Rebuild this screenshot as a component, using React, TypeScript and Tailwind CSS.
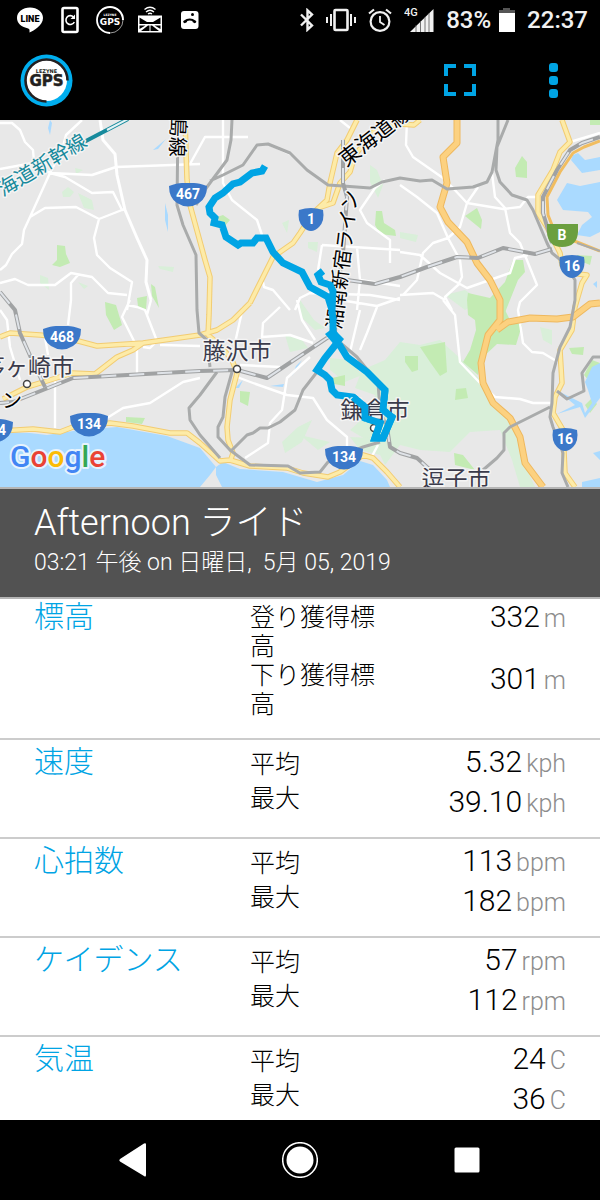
import React from "react";

type Reading = { label: string; value: string; unit: string };
type Metric = { name: string; readings: Reading[] };

const jp = "font-['Roboto','Noto_Sans_CJK_JP_Light','Noto_Sans_CJK_JP',sans-serif]";

const metrics: Metric[] = [
  {
    name: "標高",
    readings: [
      { label: "登り獲得標高", value: "332", unit: "m" },
      { label: "下り獲得標高", value: "301", unit: "m" },
    ],
  },
  {
    name: "速度",
    readings: [
      { label: "平均", value: "5.32", unit: "kph" },
      { label: "最大", value: "39.10", unit: "kph" },
    ],
  },
  {
    name: "心拍数",
    readings: [
      { label: "平均", value: "113", unit: "bpm" },
      { label: "最大", value: "182", unit: "bpm" },
    ],
  },
  {
    name: "ケイデンス",
    readings: [
      { label: "平均", value: "57", unit: "rpm" },
      { label: "最大", value: "112", unit: "rpm" },
    ],
  },
  {
    name: "気温",
    readings: [
      { label: "平均", value: "24", unit: "C" },
      { label: "最大", value: "36", unit: "C" },
    ],
  },
];

function StatusBar() {
  return (
    <div className="flex h-10 items-center justify-between pl-4 pr-3 text-[24px] leading-10 text-[#f1f1f1]">
      <div className="flex items-center gap-3">
        <svg className="h-7 w-7" viewBox="0 0 28 28">
          <path
            d="M14 1.5C6.800 1.500 1 6 1 12c0 5 4 9 10.500 10.200 1.800.4 2.300 1 2 4.300 3.500-1.500 13.500-7 13.500-14.500C27 6 21.200 1.500 14 1.500z"
            fill="#fff"
          />
          <text x="14" y="15.500" textAnchor="middle" fontSize="9" fontWeight="900" fontFamily="Roboto" fill="#000">
            LINE
          </text>
        </svg>
        <svg className="h-7 w-7" viewBox="0 0 28 28" fill="none" stroke="#fff">
          <rect x="6.500" y="2" width="15" height="24" rx="1.500" strokeWidth="2.600" />
          <path d="M17.500 11a4.400 4.400 0 1 0 .8 5" strokeWidth="1.600" />
          <path d="M19 8.500v4.500h-4.500z" fill="#fff" stroke="none" />
        </svg>
        <svg className="h-7 w-7" viewBox="0 0 28 28">
          <path d="M14 1A13 13 0 0 0 14 27" fill="none" stroke="#fff" strokeWidth="1.800" />
          <path d="M14 1A13 13 0 0 1 27 14" fill="none" stroke="#fff" strokeWidth="2" />
          <path d="M27 14A13 13 0 0 1 14 27" fill="none" stroke="#fff" strokeWidth=".6" />
          <text x="14" y="10" textAnchor="middle" fontSize="3" fontWeight="700" fontFamily="DejaVu Sans" fill="#fff">
            LEZYNE
          </text>
          <text x="14" y="18.500" textAnchor="middle" fontSize="9" fontWeight="700" fontFamily="DejaVu Sans" fill="#fff">
            GPS
          </text>
        </svg>
        <svg className="h-7 w-7" viewBox="0 0 28 28" fill="none" stroke="#fff">
          <path d="M8.500 3.500q5.500-4.500 11 0M10 6q4-3.500 8 0M12 8q2-1.500 4 0" strokeWidth="1.300" />
          <path d="M2 9.500h24v17H2z" fill="#fff" stroke="none" />
          <path d="M3.500 11.500l7.500 4.500h6l7.500-4.500v6.500h-21z" fill="#000" stroke="none" />
          <path d="M3.500 19.500h6l-6 3.500zM24.500 19.500h-6l6 3.500zM12 19.500h1.500V25H5zM16 19.500h-1.500V25H23z" fill="#000" stroke="none" />
        </svg>
        <svg className="h-7 w-7" viewBox="0 0 28 28">
          <rect x="5" y="5" width="17.500" height="18" rx="3" fill="#fff" />
          <path d="M7.500 16.500q-.8-1 .2-1.800 6-4.200 12.100 0 1 .8.2 1.800l-1.300.8-2.200-1.400v-.8q-2.700-1-5.400 0v.8l-2.300 1.400z" fill="#000" />
          <circle cx="16.500" cy="8.500" r="1.500" fill="#000" />
        </svg>
      </div>
      <div className="flex items-center gap-3">
        <svg className="h-6 w-[14px]" viewBox="0 0 14 24" fill="none" stroke="#f1f1f1" strokeWidth="2.400">
          <path d="M1 6.500l11 11-4.500 4.200V2.300l4.500 4.200-11 11" />
        </svg>
        <svg className="h-6 w-[30px]" viewBox="0 0 30 24" fill="none" stroke="#f1f1f1">
          <rect x="8.500" y="2" width="13" height="20" rx="1" strokeWidth="2.600" />
          <path d="M5 6v12M25 6v12M1 9v6M29 9v6" strokeWidth="2" />
        </svg>
        <svg className="h-6 w-6" viewBox="0 0 24 24" fill="none" stroke="#f1f1f1" strokeWidth="2.200">
          <circle cx="12" cy="13.500" r="9.400" />
          <path d="M12 8V14l4.500 3" strokeWidth="1.800" />
          <path d="M1 5.500l5-4M23 5.500l-5-4" />
        </svg>
        <svg className="h-7 w-[30px]" viewBox="0 0 30 28">
          <text x="0" y="10" fontSize="11" fontWeight="500" fontFamily="Roboto" fill="#f1f1f1">
            4G
          </text>
          <path d="M6 26L29.500 3v23z" fill="#f1f1f1" />
          <path d="M12 19v7M16.500 15v11M21 11v15M25 7v19" stroke="#555" strokeWidth=".8" />
        </svg>
        <div className="flex items-center gap-2">
          <span className="font-medium">83%</span>
          <svg className="h-6 w-4" viewBox="0 0 16 24">
            <path d="M4 0h7v2h5v4H0V2h4z" fill="#555" />
            <path d="M0 5h16v19H0z" fill="#fff" />
          </svg>
        </div>
        <span className="font-medium">22:37</span>
      </div>
    </div>
  );
}

function AppBar() {
  return (
    <header className="flex h-20 items-center justify-between pl-5 pr-8">
      <svg className="h-[53px] w-[53px]" viewBox="0 0 53 53" role="img" aria-label="Lezyne GPS">
        <circle cx="26.500" cy="26.500" r="26" fill="#00aeef" />
        <circle cx="26.500" cy="26.500" r="20.500" fill="#fff" />
        <path d="M26.500 47.500A21 21 0 1 1 47.500 26.500" fill="none" stroke="#231f20" strokeWidth="2.600" />
        <text x="26.500" y="19" textAnchor="middle" fontSize="5" fontWeight="700" fontFamily="DejaVu Sans" fill="#231f20">
          LEZYNE
        </text>
        <text x="26.500" y="31.500" textAnchor="middle" fontSize="15" fontWeight="700" fontFamily="DejaVu Sans" fill="#231f20" stroke="#231f20" strokeWidth=".5">
          GPS
        </text>
      </svg>
      <div className="flex items-center gap-[54px]">
        <button type="button" aria-label="全画面" className="p-2">
          <svg className="h-8 w-8" viewBox="0 0 32 32" fill="none" stroke="#00a4e4" strokeWidth="4">
            <path d="M2 12V2h10M20 2h10v10M30 20v10H20M12 30H2V20" />
          </svg>
        </button>
        <button type="button" aria-label="メニュー" className="flex w-[30px] flex-col items-center gap-1 py-2">
          <span className="h-[9px] w-[9px] rounded-[3px] bg-[#00a4e4]" />
          <span className="h-[9px] w-[9px] rounded-[3px] bg-[#00a4e4]" />
          <span className="h-[9px] w-[9px] rounded-[3px] bg-[#00a4e4]" />
        </button>
      </div>
    </header>
  );
}

const wideShield = "M-19-9Q-11-12-6-12H6Q11-12 19-9Q19 3 11 8Q0 15-11 8Q-19 3-19-9Z";
const narrowShield = "M-12-10Q0-14 12-10Q14 1 8 7Q0 15-8 7Q-14 1-12-10Z";

const shields = [
  { x: 188, y: 75, text: "467" },
  { x: 311, y: 100, text: "1" },
  { x: 62, y: 218, text: "468" },
  { x: 89, y: 305, text: "134" },
  { x: 344, y: 338, text: "134" },
  { x: -6, y: 311, text: "134" },
  { x: 572, y: 147, text: "16" },
  { x: 565, y: 320, text: "16" },
];

const localRoads =
  "M0 3L12 3L20 10L25 22L33 30L34 42M0 49L33 43L50 53L92 55L116 47L200 44M82 0L66 15L62 30L50 53L30 97L24 110L22 124L12 134L6 145L0 150" +
  "M50 53L65 57L92 73L113 72L122 90L99 99L76 87L45 88L30 97M99 99L94 118L97 135L110 148L132 162L127 190M125 89L122 90" +
  "M0 163L15 159L28 165L55 165L71 153L92 157L108 173L127 175M78 155L71 163L71 180L68 205M127 185L137 187L145 190L157 221L150 228L143 227" +
  "M151 180L147 195M130 180L122 197L137 227L137 253M190 44L205 17L248 17M223 0L223 63L232 80L257 100L262 115M268 24L292 35" +
  "M340 0L350 8M322 125L400 130M322 125L318 150M357 127L360 160L357 190M263 162L264 167L273 170L290 190M385 60L375 68L360 90L367 103L390 120L390 143" +
  "M295 190L300 178L310 173L370 175L400 180M407 0L406 25L413 37L443 58L453 68L467 83L503 89L520 87L528 77L538 77" +
  "M400 65L417 77L437 93L448 118L460 140L462 157L458 165L445 177L452 190M492 53L495 77L505 88L510 113L520 123L537 165L520 182L518 190L523 223L532 232L543 233L558 242" +
  "M478 67L467 83L460 107L448 118L433 123L423 133L417 160L403 175M400 132L420 135L440 153L467 168L510 153L515 138L528 135M400 175L433 173L445 180" +
  "M443 180L455 195L460 242L480 263L495 277L520 279L533 283L550 283M243 187L235 223M280 187L263 203L262 217L290 215L313 223M297 180L302 200L315 220" +
  "M237 257L253 263L287 275L313 278L327 300L347 317L347 327M310 237L287 258L282 290L270 303L268 323L245 338M240 245L280 247M377 187L367 213L360 230" +
  "M360 190L350 232M340 180L377 186L400 178M0 190L7 200L10 227L20 260M55 260L55 308M200 258L183 262L150 283L123 288L107 298M45 217L48 235M200 226L160 225M570 22L600 13M371 338L378 325M360 160L400 166";

const yellowRoads =
  "M185 0L187 60L190 85L205 140L210 157L209 195L208 215L220 225L232 240L237 253L230 280L227 307L228 320L233 333L230 342" +
  "M250 183L233 200L217 210L200 215L143 223L97 226L67 218L40 215L10 213L0 217M357 0L347 20L337 33L330 63L327 80L313 93L300 113L293 123L273 137L263 157L250 183" +
  "M318 88L333 83L340 63L350 52L355 35L375 10L400 4L414 5L420 0M143 223L133 230L117 237L95 254L72 253L50 260L27 267L3 279" +
  "M0 311L33 309L60 312L73 307L110 303L133 306L170 313L187 313L200 323L220 341L230 340L250 346L287 348L303 353L328 357L340 352L363 335L373 338L387 352L400 367" +
  "M562 0L570 22L560 32L553 50L538 75L538 93L547 107L560 133L562 145L570 153L587 155L582 163L575 187L572 210L560 230L562 263L555 277L553 293L563 310L565 353L575 367";

const orangeRoads =
  "M457 0L457 23L443 37L447 63L440 87L448 102L467 122L477 143L490 160L500 180L500 200L488 215L481 243L483 263L493 283L510 298L520 317L525 343L543 367" +
  "M497 210L508 202L530 198L557 199L573 197L590 184L600 183";

const railways =
  "M178 0L177 85L183 105L196 135L197 190L199 213L207 220L210 247M232 0L231 20L227 40L207 67L196 85M210 61L223 55L243 45L257 25L268 24L290 33L307 50L328 65L343 66L370 68L382 62L400 58L420 61L432 60L447 69L473 67L487 62L492 52L498 20L498 0" +
  "M508 0L497 27L496 50L500 62L512 75L527 80L533 90L547 123L552 133L562 141L575 160L575 180L570 207L560 227L553 253L552 283L550 297L553 307L563 333L562 353L568 367" +
  "M550 287L510 307L504 313L504 330L497 338L483 350M557 271L567 279L584 271L582 253L593 237L600 237M232 252L225 277L223 297L218 307L218 317L230 330L250 345L288 346L300 353L320 352L328 342L363 327L380 322" +
  "M317 252L303 270L295 290L280 302L268 308L260 308L253 313L247 315L232 330M217 252L200 275L189 288L190 300L200 315L220 338M337 220L357 237L378 263L380 290L387 307";

const stripedRailways =
  "M0 172L15 190L20 213L32 240L45 267M327 218L267 258L237 250L200 251L73 258L43 270L13 282L0 283M343 20L343 63L347 77L343 133L336 180L335 215L327 218" +
  "M347 160L375 164L400 157L427 147L457 137L478 138L503 128L535 134L552 129M552 123L543 93L543 77L557 50L570 30L582 23L600 17M387 307L390 327L400 333L417 338L428 348L440 360";

const route =
  "M265 46L262 51L252 53L240 62L233 64L223 73L215 78L209 87L210 93L215 98L214 103L222 105L226 117L238 125L241 123L253 123L257 118L266 118L273 132L283 143L302 152L310 167L328 177L332 190L333 200L333 212L339 222" +
  "M323 151L318 155L321 162L330 165L333 171L332 190M337 223L325 238L317 250L325 255L330 260L332 270L337 275L353 277L365 287L365 298L380 303L375 318L383 318L392 297L383 290L385 270L367 252L347 237L339 224";

function RouteMap() {
  return (
    <svg className="block h-auto w-full" viewBox="0 0 600 367" role="img" aria-label="ルートマップ">
      <rect width="600" height="367" fill="#e8e8e8" />
      <g fill="#d9efd9">
        <path d="M400 222L420 225L440 220L462 240L482 262L495 285L512 302L520 325L525 345L535 367L520 367L512 340L500 310L470 312L450 332L420 330L400 325L385 345L375 325L350 310L372 290L375 275L355 268L362 250L385 240Z" />
        <path d="M62 72L68 67L74 72L70 77L63 77ZM78 73L92 80L94 90L84 88ZM75 48L83 50L76 54ZM40 155L48 158L49 170L40 163ZM158 146L174 147L173 152L160 149ZM78 162L88 166L84 169Z" />
        <path d="M370 45L377 50L383 65L378 78L370 62ZM308 122L318 122L317 132L308 128ZM282 103L289 100L287 113ZM300 180L314 200L325 208L315 210L300 196ZM282 322L298 307L312 300L302 322L285 333ZM285 215L302 220L308 228L290 232ZM400 112L418 115L416 122L400 118Z" />
        <path d="M330 238L350 240L362 255L345 262L330 250ZM350 317L372 318L380 335L360 330ZM540 207L552 210L552 225L543 220ZM300 315L330 322L318 330ZM445 175L465 170L480 180L465 190Z" />
      </g>
      <g fill="#c3ebb3">
        <path d="M57 125L65 126L66 134L70 143L60 147L52 145L57 140ZM137 178L147 176L146 190L138 186ZM151 164L155 167L159 188L152 176ZM105 182L116 185L122 205L114 210L106 195Z" />
        <path d="M376 91L382 91L384 103L395 110L396 116L380 114L375 105ZM515 48L522 36L527 42L527 58L516 57ZM465 96L477 88L482 100L481 109ZM513 140L523 140L525 152L518 160L510 180L500 205L500 190L478 190L467 180L468 173L490 178L505 162Z" />
        <path d="M467 180L500 180L510 200L522 205L516 225L497 224L480 240L478 255L463 242L470 230L476 210L475 200L468 195ZM420 227L445 222L447 252L440 256L430 242ZM405 236L418 236L418 250L412 252L405 242ZM454 333L463 335L475 350L455 345Z" />
        <path d="M332 258L345 255L345 266L334 264ZM240 271L250 272L248 286L240 282ZM126 297L145 298L142 304L126 302ZM577 135L592 136L590 145L578 140ZM569 228L584 227L583 235L572 234ZM590 0H600V5H590ZM223 95L230 100L224 107L217 97ZM584 255L592 240L600 243L590 262ZM456 269L466 268L468 278L455 280ZM585 285L592 278L597 284L590 293Z" />
      </g>
      <g fill="#aadaff">
        <path d="M0 312L30 313L47 315L80 310L117 307L167 316L200 328L216 347L210 355L200 367H0ZM216 347L223 342L240 349L283 352L317 362L343 355L360 341L373 345L387 360L390 367H222L216 355Z" />
        <path d="M567 63L580 66L600 62V112L590 117L577 115L582 105L592 97L588 92L563 90L557 80ZM573 35L578 33L585 40L600 37V50L582 53L571 40ZM558 271L570 277L582 283L585 293L592 283L588 270L585 262L592 247L600 243V278L585 298L580 287L557 294L575 285ZM582 362L600 358V367H582ZM593 333L600 331V340ZM593 164L597 161L597 168Z" />
        <path d="M165 83L168 95L168 112L165 100ZM153 30L166 19L158 29ZM50 0L52 3L50 15L48 8ZM302 240L292 256L296 246ZM235 268L243 260L239 268ZM270 266L284 264L283 267Z" />
      </g>
      <g fill="none" strokeLinejoin="round">
        <path d={localRoads} stroke="#fff" strokeWidth="2.400" />
        <path d="M100 0L103 20L115 34L117 55L125 90L137 118L147 140L146 162L151 180" stroke="#fff" strokeWidth="3" />
        <path d={yellowRoads} stroke="#f2cc72" strokeWidth="5.500" />
        <path d={yellowRoads} stroke="#fdeba8" strokeWidth="3.500" />
        <path d="M600 21L584 27L573 33L560 52L547 77L548 95L556 115L577 122L600 131" stroke="#f1bd60" strokeWidth="3" />
        <path d={orangeRoads} stroke="#eeb85e" strokeWidth="7" />
        <path d={orangeRoads} stroke="#fcd180" strokeWidth="5" />
        <path d={railways} stroke="#a9abab" strokeWidth="3" />
        <path d="M577 123L600 131" stroke="#a9abab" strokeWidth="2" />
        <path d={stripedRailways} stroke="#a0a2a3" strokeWidth="4" />
        <path d={stripedRailways} stroke="#dfe3e8" strokeWidth="2" strokeDasharray="15 13" />
        <path d="M84 22L128-1" stroke="#178a9c" strokeWidth="4" />
        <path d="M107 10L128-1" stroke="#e4f3f5" strokeWidth="2" />
      </g>
      <g
        fontFamily="'Noto Sans CJK JP', sans-serif"
        fontSize="20"
        fontWeight="400"
        stroke="#f4f4f4"
        strokeWidth="3"
        strokeLinejoin="round"
        paintOrder="stroke"
      >
        <text transform="translate(42 45) rotate(-31)" y="7" textAnchor="middle" fill="#178a9c">
          海道新幹線
        </text>
        <text transform="translate(177 37) rotate(92)" y="7" textAnchor="end" fill="#000">
          島線
        </text>
        <text transform="translate(342 42) rotate(-38)" y="7" fontSize="21" fill="#000">
          東海道線
        </text>
        <text transform="translate(334 209) rotate(-83)" y="7" fill="#000">
          湘南新宿ライン
        </text>
        <text x="2" y="288" fill="#000">
          ン
        </text>
      </g>
      <path d={route} fill="none" stroke="#00a4e4" strokeWidth="7" strokeLinejoin="miter" />
      <path d="M325 214L333 208L344 219L337 228Z" fill="#00a4e4" />
      <g
        fontFamily="'Noto Sans CJK JP', sans-serif"
        fontSize="23"
        fontWeight="400"
        fill="#3b3b4b"
        stroke="#f4f4f4"
        strokeWidth="3"
        strokeLinejoin="round"
        paintOrder="stroke"
      >
        <text x="237" y="239" textAnchor="middle">
          藤沢市
        </text>
        <text x="74" y="255" textAnchor="end">
          茅ヶ崎市
        </text>
        <text x="456" y="367" textAnchor="middle">
          逗子市
        </text>
        <text x="375" y="298" textAnchor="middle">
          鎌倉市
        </text>
      </g>
      <g fill="#fff" stroke="#444" strokeWidth="1.500">
        <circle cx="237" cy="249" r="3.500" />
        <circle cx="27" cy="264" r="3.500" />
        <circle cx="374" cy="308" r="3.500" />
      </g>
      <path d="M353 277L365 287L365 298L380 303L375 318L383 318L392 297L383 290L385 270" fill="none" stroke="#00a4e4" strokeWidth="7" />
      <g fontFamily="Roboto, sans-serif" fontSize="14" fontWeight="700" textAnchor="middle">
        {shields.map((shield) => (
          <g key={`${shield.x}-${shield.y}`} transform={`translate(${shield.x} ${shield.y})`}>
            <path d={shield.text.length > 2 ? wideShield : narrowShield} fill="#3b78c9" />
            <text y="4" fill="#fff">
              {shield.text}
            </text>
          </g>
        ))}
        <path d="M547 104H578V112Q577 127 562 127Q548 127 547 112Z" fill="#6b9f3f" />
        <text x="562" y="120" fill="#fff">
          B
        </text>
      </g>
      <text
        x="10"
        y="347"
        fontFamily="Roboto, sans-serif"
        fontSize="30"
        fontWeight="500"
        stroke="#e6f3fd"
        strokeWidth="4"
        strokeLinejoin="round"
        paintOrder="stroke"
      >
        <tspan fill="#4285f4">G</tspan>
        <tspan fill="#ea4335">o</tspan>
        <tspan fill="#fbbc05">o</tspan>
        <tspan fill="#4285f4">g</tspan>
        <tspan fill="#34a853">l</tspan>
        <tspan fill="#ea4335">e</tspan>
      </text>
    </svg>
  );
}

function MetricRows({ metric, first, last }: { metric: Metric; first: boolean; last: boolean }) {
  const rowHeights = first ? ["h-[62px]", "h-[78px]"] : last ? ["h-10", "h-[42px]"] : ["h-10", "h-[58px]"];
  const labelPads = first ? ["pt-1", "pt-0"] : ["pt-[10px]", "pt-1"];

  return (
    <tbody className={first ? "" : "border-t-2 border-[#cccccc]"}>
      {metric.readings.map((reading, i) => (
        <tr key={reading.label} className={rowHeights[i]}>
          {i === 0 && (
            <th
              scope="rowgroup"
              rowSpan={metric.readings.length}
              className={`pl-[34px] text-left align-top text-[30px] font-light leading-9 text-[#00a4e4] ${first ? "" : "pt-1"}`}
            >
              {metric.name}
            </th>
          )}
          <th
            scope="row"
            className={`pr-2 text-left align-top text-[25px] font-light leading-[29px] text-black ${labelPads[i]}`}
          >
            {reading.label}
          </th>
          <td className={`pr-[34px] text-right align-top text-[30px] leading-9 text-black ${first ? "" : "pt-1"}`}>
            {reading.value}
            <span className="ml-1 text-[25px] leading-none text-[#8c8c8c]">{reading.unit}</span>
          </td>
        </tr>
      ))}
    </tbody>
  );
}

function NavBar() {
  return (
    <nav className="flex h-20 shrink-0 items-center justify-around bg-black px-[50px]">
      <button type="button" aria-label="戻る" className="p-2">
        <svg className="h-9 w-9" viewBox="0 0 36 36">
          <path d="M5 17L29 1.500Q31 .5 31 2.500V33Q31 35.500 29 34L5 19.500Q3.500 18.200 5 17z" fill="#fff" />
        </svg>
      </button>
      <button type="button" aria-label="ホーム" className="p-2">
        <svg className="h-9 w-9" viewBox="0 0 36 36">
          <circle cx="18" cy="18" r="17.300" fill="none" stroke="#fff" strokeWidth="1.500" />
          <circle cx="18" cy="18" r="13.500" fill="#fff" />
        </svg>
      </button>
      <button type="button" aria-label="最近のアプリ" className="p-2">
        <svg className="h-9 w-9" viewBox="0 0 36 36">
          <rect x="5.500" y="5.500" width="25" height="25" rx="1.500" fill="#fff" />
        </svg>
      </button>
    </nav>
  );
}

export default function App() {
  return (
    <div className={`flex min-h-screen flex-col bg-white font-light ${jp}`}>
      <div className="bg-black font-normal">
        <StatusBar />
        <AppBar />
      </div>
      <main className="flex-1">
        <RouteMap />
        <div className="border-y-2 border-[#b5b5b5] bg-[#525252] px-[34px] pb-4 pt-3 text-white">
          <h1 className="text-[36px] leading-[44px]">Afternoon ライド</h1>
          <p className="text-[23px] leading-9">03:21 午後 on 日曜日,&nbsp; 5月 05, 2019</p>
        </div>
        <table className="w-full table-fixed">
          <colgroup>
            <col className="w-5/12" />
            <col className="w-1/4" />
            <col className="w-1/3" />
          </colgroup>
          {metrics.map((metric, i) => (
            <MetricRows key={metric.name} metric={metric} first={i === 0} last={i === metrics.length - 1} />
          ))}
        </table>
      </main>
      <NavBar />
    </div>
  );
}
